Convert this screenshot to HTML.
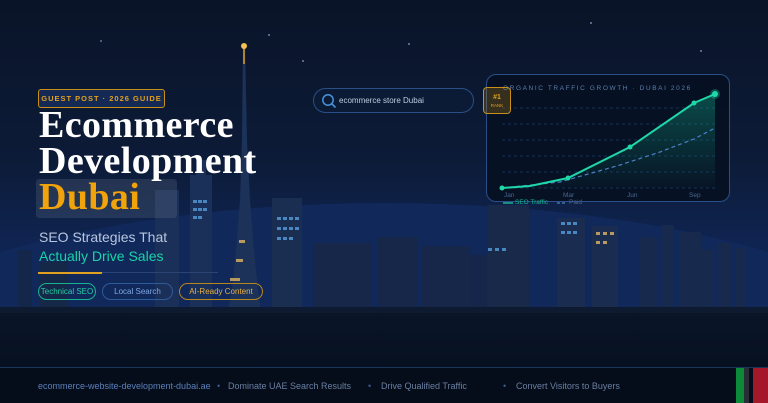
<!DOCTYPE html>
<html><head><meta charset="utf-8"><style>
*{margin:0;padding:0;box-sizing:border-box}
html,body{width:768px;height:403px;overflow:hidden}
body{position:relative;font-family:"Liberation Sans","DejaVu Sans",sans-serif;background:linear-gradient(#0a1428 0%,#0c1b38 40%,#0f2450 60%,#0f2450 100%)}
.abs{position:absolute}
.b{position:absolute;background:#172a4c}
.w{position:absolute;width:4px;height:3px;background:#4a86c0}
.g{position:absolute;width:4px;height:3px;background:#b89a60}
.ft{position:absolute;top:381px;font-size:9px;color:#6a7fa0;white-space:nowrap}
</style></head><body>
<div class="abs" style="left:-200px;top:203px;width:1170px;height:200px;border-radius:50% 50% 0 0/100% 100% 0 0;background:#11285a"></div>
<div class="abs" style="left:268px;top:34px;width:2px;height:2px;background:#6f82a8;border-radius:50%"></div>
<div class="abs" style="left:302px;top:60px;width:2px;height:2px;background:#6f82a8;border-radius:50%"></div>
<div class="abs" style="left:408px;top:43px;width:2px;height:2px;background:#6f82a8;border-radius:50%"></div>
<div class="abs" style="left:590px;top:22px;width:2px;height:2px;background:#6f82a8;border-radius:50%"></div>
<div class="abs" style="left:700px;top:50px;width:2px;height:2px;background:#6f82a8;border-radius:50%"></div>
<div class="abs" style="left:100px;top:40px;width:2px;height:2px;background:#5f72a0;border-radius:50%"></div>
<div class="b" style="left:18px;top:250px;width:14px;height:70px;background:#14264a"></div>
<div class="b" style="left:155px;top:190px;width:24px;height:130px;background:#1b3058"></div>
<div class="b" style="left:40px;top:262px;width:28px;height:58px;background:#152848"></div>
<div class="b" style="left:190px;top:175px;width:22px;height:145px;background:#1b3058"></div>
<div class="b" style="left:196px;top:160px;width:10px;height:20px;background:#1b3058"></div>
<div class="w" style="left:193px;top:200px"></div><div class="w" style="left:198px;top:200px"></div><div class="w" style="left:203px;top:200px"></div>
<div class="w" style="left:193px;top:208px"></div><div class="w" style="left:198px;top:208px"></div><div class="w" style="left:203px;top:208px"></div>
<div class="w" style="left:193px;top:216px"></div><div class="w" style="left:198px;top:216px"></div>
<svg class="abs" style="left:0;top:0" width="768" height="403">
<polygon points="243,45 245,45 247,140 250,200 254,250 258,290 262,320 226,320 232,290 236,250 240,200 242,140" fill="#1c3259"/>
<line x1="244" y1="47" x2="244" y2="64" stroke="#e0a020" stroke-width="1.5"/>
<circle cx="244" cy="46" r="3" fill="#f4c050"/>
</svg>
<div class="g" style="left:239px;top:240px;width:6px"></div><div class="g" style="left:236px;top:259px;width:7px"></div><div class="g" style="left:230px;top:278px;width:10px"></div>
<div class="b" style="left:272px;top:198px;width:30px;height:122px;background:#1a2e52"></div>
<div class="w" style="left:277px;top:217px"></div><div class="w" style="left:283px;top:217px"></div><div class="w" style="left:289px;top:217px"></div><div class="w" style="left:295px;top:217px"></div>
<div class="w" style="left:277px;top:227px"></div><div class="w" style="left:283px;top:227px"></div><div class="w" style="left:289px;top:227px"></div><div class="w" style="left:295px;top:227px"></div>
<div class="w" style="left:277px;top:237px"></div><div class="w" style="left:283px;top:237px"></div><div class="w" style="left:289px;top:237px"></div>
<div class="b" style="left:313px;top:243px;width:58px;height:77px;background:#16274a"></div>
<div class="b" style="left:378px;top:237px;width:40px;height:83px;background:#16274a"></div>
<div class="b" style="left:422px;top:246px;width:48px;height:74px;background:#16274a"></div>
<div class="b" style="left:470px;top:255px;width:50px;height:65px;background:#15264a"></div>
<div class="b" style="left:487px;top:205px;width:42px;height:115px;background:#19294a"></div>
<div class="w" style="left:488px;top:248px"></div><div class="w" style="left:495px;top:248px"></div><div class="w" style="left:502px;top:248px"></div>
<div class="b" style="left:557px;top:218px;width:28px;height:102px;background:#1a2c4f"></div>
<div class="w" style="left:561px;top:222px"></div><div class="w" style="left:567px;top:222px"></div><div class="w" style="left:573px;top:222px"></div>
<div class="w" style="left:561px;top:231px"></div><div class="w" style="left:567px;top:231px"></div><div class="w" style="left:573px;top:231px"></div>
<div class="b" style="left:592px;top:226px;width:26px;height:94px;background:#1a2c4f"></div>
<div class="g" style="left:596px;top:232px"></div><div class="g" style="left:603px;top:232px"></div><div class="g" style="left:610px;top:232px"></div>
<div class="g" style="left:596px;top:241px"></div><div class="g" style="left:603px;top:241px"></div>
<div class="b" style="left:640px;top:237px;width:18px;height:83px;background:#172a4d"></div>
<div class="b" style="left:661px;top:225px;width:13px;height:95px;background:#172a4d"></div>
<div class="b" style="left:679px;top:232px;width:22px;height:88px;background:#172a4d"></div>
<div class="b" style="left:702px;top:250px;width:12px;height:70px;background:#172a4d"></div>
<div class="b" style="left:717px;top:243px;width:14px;height:77px;background:#172a4d"></div>
<div class="b" style="left:735px;top:248px;width:11px;height:72px;background:#172a4d"></div>
<div class="abs" style="left:0;top:307px;width:768px;height:8px;background:#0d1a30"></div>
<div class="abs" style="left:0;top:313px;width:768px;height:55px;background:linear-gradient(#0a1528,#06101f)"></div>
<div class="abs" style="left:0;top:367px;width:768px;height:36px;background:#050d1b;border-top:1px solid #1c355f"></div>
<div class="ft" style="left:38px;color:#5b80b8">ecommerce-website-development-dubai.ae</div>
<div class="ft" style="left:217px;color:#3a5a90">•</div>
<div class="ft" style="left:228px">Dominate UAE Search Results</div>
<div class="ft" style="left:368px;color:#3a5a90">•</div>
<div class="ft" style="left:381px">Drive Qualified Traffic</div>
<div class="ft" style="left:503px;color:#3a5a90">•</div>
<div class="ft" style="left:516px">Convert Visitors to Buyers</div>
<div class="abs" style="left:736px;top:368px;width:8px;height:35px;background:#0c8a3a"></div>
<div class="abs" style="left:744px;top:368px;width:5px;height:35px;background:#2a2f36"></div>
<div class="abs" style="left:753px;top:368px;width:15px;height:35px;background:#a5182a"></div>
<div class="abs" style="left:38px;top:89px;width:127px;height:19px;border:1px solid #c8901a;border-radius:3px;background:#142a55;color:#e0a020;font-size:7.5px;font-weight:bold;letter-spacing:1px;line-height:17px;text-align:center;white-space:nowrap">GUEST POST · 2026 GUIDE</div>
<div class="abs" style="left:36px;top:179px;width:141px;height:39px;background:rgba(120,130,150,0.22);border-radius:3px"></div>
<div class="abs" style="left:39px;top:107px;font-family:'Liberation Serif',serif;font-weight:bold;font-size:38px;line-height:36px;color:#fff;white-space:nowrap;letter-spacing:0.4px">Ecommerce<br>Development<br><span style="color:#f0a30a">Dubai</span></div>
<div class="abs" style="left:39px;top:229px;font-size:14px;color:#b8c6e0;white-space:nowrap">SEO Strategies That</div>
<div class="abs" style="left:39px;top:248px;font-size:14px;color:#19d3a6;white-space:nowrap">Actually Drive Sales</div>
<div class="abs" style="left:38px;top:272px;width:180px;height:1px;background:#2a4575"></div>
<div class="abs" style="left:38px;top:272px;width:64px;height:2px;background:#e0a020"></div>
<div class="abs" style="left:38px;top:283px;width:58px;height:17px;border:1px solid #16b391;border-radius:9px;color:#22d0a6;font-size:8px;line-height:15px;text-align:center;white-space:nowrap">Technical SEO</div>
<div class="abs" style="left:102px;top:283px;width:71px;height:17px;border:1px solid #2f5a9a;border-radius:9px;color:#7fa8e0;font-size:8px;line-height:15px;text-align:center;white-space:nowrap">Local Search</div>
<div class="abs" style="left:179px;top:283px;width:84px;height:17px;border:1px solid #b8861c;border-radius:9px;color:#e8b040;font-size:8px;line-height:15px;text-align:center;white-space:nowrap">AI-Ready Content</div>
<div class="abs" style="left:313px;top:88px;width:161px;height:25px;border:1px solid #2a4f88;border-radius:13px;background:#0b1a35"></div>
<svg class="abs" style="left:321px;top:93px" width="16" height="16"><circle cx="7" cy="7" r="5.2" fill="none" stroke="#4a90d8" stroke-width="1.5"/><line x1="11" y1="11" x2="14.5" y2="14.5" stroke="#4a90d8" stroke-width="1.6"/></svg>
<div class="abs" style="left:339px;top:96px;font-size:8px;color:#c0cde0;white-space:nowrap">ecommerce store Dubai</div>
<div class="abs" style="left:486px;top:74px;width:244px;height:128px;border:1px solid #2a4f88;border-radius:10px;background:rgba(6,16,34,0.92)"></div>
<div class="abs" style="left:503px;top:85px;font-size:6.5px;color:#5d7eaa;letter-spacing:1.6px;white-space:nowrap">ORGANIC TRAFFIC GROWTH · DUBAI 2026</div>
<svg class="abs" style="left:0;top:0" width="768" height="403">
<defs><linearGradient id="fa" x1="0" y1="0" x2="0" y2="1"><stop offset="0" stop-color="#14b890" stop-opacity="0.35"/><stop offset="1" stop-color="#14b890" stop-opacity="0.02"/></linearGradient></defs>
<g stroke="#1c3a66" stroke-width="0.8" stroke-dasharray="3,3">
<line x1="502" y1="108" x2="715" y2="108"/><line x1="502" y1="124" x2="715" y2="124"/><line x1="502" y1="140" x2="715" y2="140"/><line x1="502" y1="156" x2="715" y2="156"/><line x1="502" y1="172" x2="715" y2="172"/><line x1="502" y1="188" x2="715" y2="188"/></g>
<path d="M502,188 L530,186 L568,178 L630,147 L694,103 L715,94 L715,188 Z" fill="url(#fa)"/>
<path d="M502,188 L560,182 L620,165 L660,152 L694,139 L715,128" fill="none" stroke="#4a80c8" stroke-width="1.2" stroke-dasharray="4,3"/>
<path d="M502,188 L530,186 L568,178 L630,147 L694,103 L715,94" fill="none" stroke="#1fd8a8" stroke-width="2"/>
<circle cx="502" cy="188" r="2.5" fill="#1fd8a8"/><circle cx="568" cy="178" r="2.5" fill="#1fd8a8"/><circle cx="630" cy="147" r="2.5" fill="#1fd8a8"/><circle cx="694" cy="103" r="2.5" fill="#1fd8a8"/>
<circle cx="715" cy="94" r="5" fill="#1fd8a8" opacity="0.3"/><circle cx="715" cy="94" r="3" fill="#1fd8a8"/>
<line x1="503" y1="203" x2="513" y2="203" stroke="#1fd8a8" stroke-width="1.2"/>
<line x1="557" y1="203" x2="567" y2="203" stroke="#4a80c8" stroke-width="1.2" stroke-dasharray="3,2"/>
</svg>
<div class="abs" style="left:504px;top:192px;font-size:6.5px;color:#4a6690">Jan</div>
<div class="abs" style="left:563px;top:192px;font-size:6.5px;color:#4a6690">Mar</div>
<div class="abs" style="left:627px;top:192px;font-size:6.5px;color:#4a6690">Jun</div>
<div class="abs" style="left:689px;top:192px;font-size:6.5px;color:#4a6690">Sep</div>
<div class="abs" style="left:515px;top:199px;font-size:6.5px;color:#16b391">SEO Traffic</div>
<div class="abs" style="left:569px;top:199px;font-size:6.5px;color:#4a6690">Paid</div>
<div class="abs" style="left:483px;top:87px;width:28px;height:27px;border:1.5px solid #c8901a;border-radius:4px;background:rgba(170,120,20,0.3);text-align:center;color:#e0a020"><div style="font-size:7px;font-weight:bold;margin-top:6px">#1</div><div style="font-size:4.5px;margin-top:2px">RANK</div></div>
</body></html>
